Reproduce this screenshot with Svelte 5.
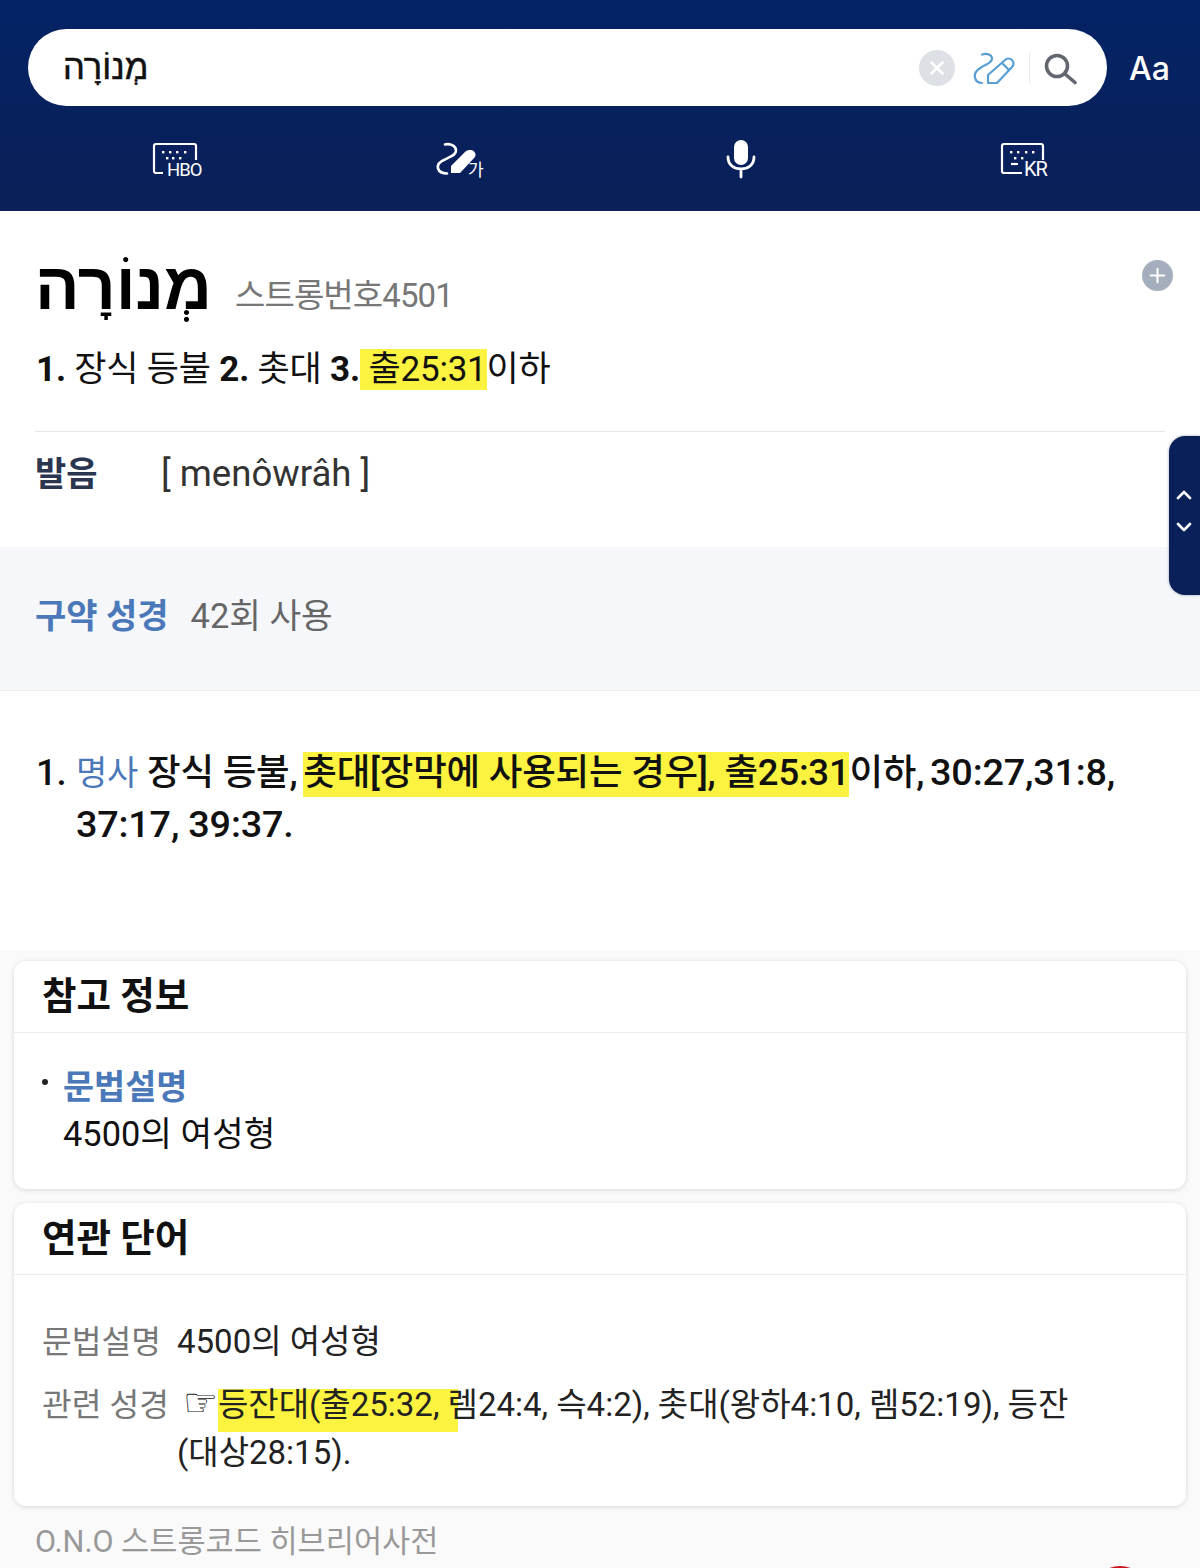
<script>
  const tools = [
    { id: 'hbo', label: 'HBO' },
    { id: 'hand', label: '가' },
    { id: 'mic', label: '' },
    { id: 'kr', label: 'KR' }
  ];
</script>

<div class="page">
  <header class="top">
    <div class="search-row">
      <div class="search">
        <span class="query" dir="rtl">מְנוֹרָה</span>
        <span class="clear">
          <svg width="18" height="18" viewBox="0 0 18 18"><path d="M3.5 3.5l11 11M14.5 3.5l-11 11" stroke="#fff" stroke-width="2.6" stroke-linecap="round"/></svg>
        </span>
        <svg class="pen" width="44" height="36" viewBox="0 0 44 36" fill="none" stroke="#5a9fd4" stroke-width="2.2" stroke-linecap="round" stroke-linejoin="round">
          <path d="M10 4.5c5-1.500 10 0 10 4 0 5-7 6-11 9-5 3-7 6-6 10 .6 3 3 5.500 7 5.500"/>
          <path d="M16 33v-8L33 10c2-2 5-2 7 0s2 5 0 7L25 33z"/>
          <path d="M30 13l7 7"/>
        </svg>
        <span class="divider"></span>
        <svg class="loupe" width="34" height="34" viewBox="0 0 34 34" fill="none" stroke="#62666e" stroke-width="3.6" stroke-linecap="round">
          <circle cx="13" cy="15" r="10.500"/>
          <path d="M21 23l10 8.500"/>
        </svg>
      </div>
      <span class="aa">Aa</span>
    </div>
    <div class="tools">
      {#each tools as t}
        <div class="tool">
          {#if t.id === 'hbo'}
            <svg width="50" height="38" viewBox="0 0 50 38" fill="none">
              <path d="M11 31H4a2 2 0 0 1-2-2V4a2 2 0 0 1 2-2h38a2 2 0 0 1 2 2v14" stroke="#fff" stroke-width="2.2"/>
              <g fill="#fff">
                <rect x="10" y="9" width="2.400" height="2.400"/><rect x="17" y="9" width="2.400" height="2.400"/><rect x="24" y="9" width="2.400" height="2.400"/><rect x="32" y="9" width="2.400" height="2.400"/>
                <rect x="14" y="15" width="2.400" height="2.400"/><rect x="20" y="15" width="2.400" height="2.400"/><rect x="27" y="15" width="2.400" height="2.400"/>
              </g>
              <text x="15" y="34" class="kb-text">HBO</text>
            </svg>
          {:else if t.id === 'kr'}
            <svg width="50" height="38" viewBox="0 0 50 38" fill="none">
              <path d="M24 31H6a2 2 0 0 1-2-2V4a2 2 0 0 1 2-2h37a2 2 0 0 1 2 2v14" stroke="#fff" stroke-width="2.2"/>
              <g fill="#fff">
                <rect x="12" y="9" width="2.400" height="2.400"/><rect x="19" y="9" width="2.400" height="2.400"/><rect x="27" y="9" width="2.400" height="2.400"/><rect x="34" y="9" width="2.400" height="2.400"/>
                <rect x="16" y="15" width="2.400" height="2.400"/><rect x="23" y="15" width="2.400" height="2.400"/>
              </g>
              <path d="M13 22h7" stroke="#fff" stroke-width="2.200"/>
              <text x="26" y="34" class="kb-text kr">KR</text>
            </svg>
          {:else if t.id === 'hand'}
            <svg width="50" height="38" viewBox="0 0 50 38" fill="none">
              <path d="M11 2.500c6-1.500 11 2 11 6 0 5-6 6-11 9-5 2-8 5-7 9 1 3 4 5 9 5" stroke="#fff" stroke-width="2.600" stroke-linecap="round"/>
              <path d="M17 31v-7L31 10c2.500-2.500 7-2.500 9-.5 2 2 2 4 .5 6L26 31z" fill="#fff"/>
              <text x="34" y="34" class="kb-text ko">가</text>
            </svg>
          {:else}
            <svg class="mic" width="30" height="38" viewBox="0 0 30 38" fill="none">
              <rect x="8" y="0" width="14" height="25" rx="7" fill="#fff"/>
              <path d="M2 17c0 8 6 12 13 12s13-4 13-12M15 29v8" stroke="#fff" stroke-width="2.8" stroke-linecap="round"/>
            </svg>
          {/if}
        </div>
      {/each}
    </div>
  </header>

  <section class="head">
    <div class="word-row">
      <span class="word" dir="rtl">מְנוֹרָה</span>
      <span class="strong">스트롱번호4501</span>
      <span class="plus">
        <svg width="20" height="20" viewBox="0 0 20 20"><path d="M10 2v16M2 10h16" stroke="#fff" stroke-width="2.4" stroke-linecap="round"/></svg>
      </span>
    </div>
    <p class="brief"><b>1.</b> 장식 등불 <b>2.</b> 촛대 <b>3.</b><mark class="hl-brief">{' '}출25:31</mark>이하</p>
    <div class="pron">
      <b>발음</b>
      <span>[ menôwrâh ]</span>
    </div>
  </section>

  <section class="testament">
    <b>구약 성경</b>
    <span>42회 사용</span>
  </section>

  <section class="defs">
    <span class="num">1.</span>
    <p><span class="pos">명사</span> 장식 등불, <mark class="hl-def">촛대[장막에 사용되는 경우], 출25:31</mark>이하, <span class="refs">30:27,31:8, 37:17, 39:37.</span></p>
  </section>

  <div class="lower">
    <article class="card card-one">
      <h2>참고 정보</h2>
      <div class="card-body">
        <div class="note"><i></i><b>문법설명</b></div>
        <p>4500의 여성형</p>
      </div>
    </article>

    <article class="card card-two">
      <h2>연관 단어</h2>
      <div class="rel">
        <span class="lbl">문법설명</span>
        <span>4500의 여성형</span>
        <span class="lbl">관련 성경</span>
        <span class="verse"><span class="hand">☞</span><mark class="hl-rel">등잔대(출25:32,{' '}</mark>렘24:4, 슥4:2), 촛대(왕하4:10, 렘52:19), 등잔(대상28:15).</span>
      </div>
    </article>

    <footer>O.N.O 스트롱코드 히브리어사전</footer>
  </div>

  <aside class="side">
    <svg width="16" height="42" viewBox="0 0 16 42" fill="none" stroke="#fff" stroke-width="2.6" stroke-linecap="round" stroke-linejoin="round">
      <path d="M2 8l6-6 6 6M2 34l6 6 6-6"/>
    </svg>
  </aside>
  <span class="fab"></span>
</div>

<style>
  :global(body) {
    margin: 0;
    background: #fff;
  }

  .page {
    position: relative;
    width: 1200px;
    height: 1568px;
    overflow: hidden;
    background: #fff;
    font-family: Roboto, "Noto Sans CJK KR", sans-serif;
    font-size: 35px;
    color: #111;
  }

  p { margin: 0; }

  mark { color: inherit; background: #fbf33f; }

  .top {
    height: 211px;
    box-sizing: border-box;
    padding-top: 29px;
    background: linear-gradient(#042365, #0a2058);
  }

  .search-row {
    display: flex;
    align-items: center;
    padding-left: 28px;
  }

  .search {
    width: 1079px;
    height: 77px;
    box-sizing: border-box;
    padding: 0 29px 0 35px;
    display: flex;
    align-items: center;
    background: #fff;
    border-radius: 39px;
  }

  .query {
    margin-right: auto;
    font: 34.5px "Liberation Sans", sans-serif;
    -webkit-text-stroke: 0.5px #111;
    color: #111;
  }

  .clear {
    width: 36px;
    height: 36px;
    display: flex;
    align-items: center;
    justify-content: center;
    border-radius: 50%;
    background: #dde0e5;
  }

  .pen { margin-left: 17px; }

  .divider {
    width: 1px;
    height: 32px;
    margin: 0 14px 0 13px;
    background: #e8eaec;
  }

  .aa {
    margin-left: 22px;
    padding-top: 2px;
    font: 500 32px Inter, sans-serif;
    color: #fff;
  }

  .tools {
    margin-top: 36px;
    padding: 0 36px;
    display: grid;
    grid-template-columns: repeat(4, 282px);
  }

  .tool {
    height: 38px;
    display: flex;
    justify-content: center;
    align-items: center;
  }

  .tool svg { overflow: visible; }

  .mic { margin-bottom: 4px; }

  .kb-text {
    font: 400 18.5px Roboto, "Noto Sans CJK KR", sans-serif;
    letter-spacing: -1px;
    fill: #fff;
  }

  .kb-text.kr { font-size: 20px; }
  .kb-text.ko { font-size: 17px; letter-spacing: 0; }

  .head {
    position: relative;
    height: 336px;
    box-sizing: border-box;
    padding: 36px 35px 0;
  }

  .word-row {
    display: flex;
    align-items: flex-end;
    height: 82px;
  }

  .word {
    margin-bottom: 5px;
    font: 700 66px "Liberation Sans", sans-serif;
    color: #000;
  }

  .strong {
    margin: 0 0 12px 23px;
    font-size: 33px;
    letter-spacing: -0.9px;
    color: #777;
  }

  .plus {
    position: absolute;
    top: 49px;
    right: 27px;
    width: 31px;
    height: 31px;
    display: flex;
    align-items: center;
    justify-content: center;
    border-radius: 50%;
    background: #a5aebc;
  }

  .plus svg { width: 17px; height: 17px; }

  .brief {
    margin-top: 16px;
    padding: 0 1px 36px;
    line-height: 50px;
    font-size: 35px;
    letter-spacing: -0.2px;
    border-bottom: 1px solid #e8e8e8;
  }

  .pron {
    display: flex;
    align-items: center;
    height: 84px;
  }

  .pron b {
    width: 126px;
    padding-bottom: 6px;
    font-size: 34px;
    color: #2a3550;
  }

  .pron span {
    padding-bottom: 2px;
    font-size: 36.6px;
    color: #333;
  }

  .testament {
    height: 144px;
    box-sizing: border-box;
    padding: 0 0 11px 35px;
    display: flex;
    align-items: center;
    gap: 22px;
    font-size: 34px;
    background: #f5f7fa;
    border-bottom: 1px solid #eceef0;
  }

  .testament b { color: #4a78b8; }
  .testament span { font-size: 34.4px; color: #666; }

  .defs {
    height: 259px;
    box-sizing: border-box;
    padding: 56px 60px 0 36px;
    display: flex;
    font-size: 36.5px;
    letter-spacing: -0.2px;
    line-height: 52px;
    font-weight: 500;
  }

  .num { width: 40px; flex: none; }

  .pos { font-size: 34px; color: #4a78b8; font-weight: 400; }

  .refs { margin-left: -3px; font-size: 37.8px; line-height: 1; }

  .lower {
    height: 620px;
    box-sizing: border-box;
    padding: 11px 14px 0;
    background: #fafafa;
  }

  .card {
    background: #fff;
    border-radius: 12px;
    box-shadow: 0 1px 5px rgba(0, 0, 0, 0.14);
  }

  .card-one { height: 228px; }
  .card-two { height: 303px; margin-top: 14px; }

  h2 {
    margin: 0;
    height: 72px;
    box-sizing: border-box;
    padding-left: 28px;
    line-height: 70px;
    font-size: 37.5px;
    font-weight: 700;
    color: #111;
    border-bottom: 1px solid #ececec;
  }

  .card-body {
    padding: 31px 49px 0;
    line-height: 47px;
    font-size: 34.4px;
  }

  .note {
    position: relative;
  }

  .note i {
    position: absolute;
    left: -21px;
    top: 15px;
    width: 6px;
    height: 6px;
    border-radius: 50%;
    background: #222;
  }

  .note b { color: #4a78b8; font-size: 33.8px; }

  .rel {
    padding: 43px 80px 0 28px;
    display: grid;
    grid-template-columns: 135px 1fr;
    row-gap: 15px;
    line-height: 48px;
    font-size: 33px;
    color: #222;
  }

  .lbl { font-size: 32.3px; color: #777; white-space: nowrap; }

  .hand {
    font-family: "DejaVu Sans", sans-serif;
    font-size: 39px;
    line-height: 0;
    margin-left: 6px;
  }

  .hl-rel {
    padding: 0 10px 8px 0;
    margin-right: -10px;
    background: linear-gradient(transparent 4px, #fbf33f 4px);
  }

  .hl-def {
    margin-left: -3px;
    padding: 1px 0 3px;
    background: linear-gradient(transparent 2px, #fbf33f 2px);
  }

  footer {
    margin-top: 11px;
    padding-left: 21px;
    font-size: 30.6px;
    color: #999;
  }

  .side {
    position: absolute;
    left: 1169px;
    top: 436px;
    width: 31px;
    height: 159px;
    box-sizing: border-box;
    display: flex;
    align-items: center;
    justify-content: center;
    padding: 0 2px 9px 0;
    background: #0a2058;
    border-radius: 16px 0 0 16px;
    box-shadow: 0 0 3px rgba(10, 32, 88, 0.4);
  }

  .fab {
    position: absolute;
    left: 1090px;
    top: 1566px;
    width: 60px;
    height: 60px;
    border-radius: 50%;
    background: #c8171e;
  }
</style>
